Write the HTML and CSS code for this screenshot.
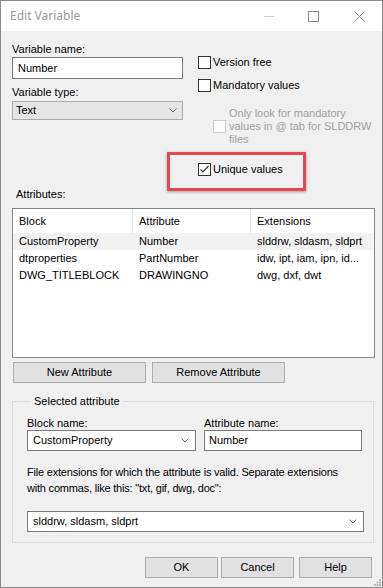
FILE: index.html
```html
<!DOCTYPE html>
<html>
<head>
<meta charset="utf-8">
<link rel="stylesheet" href="styles.css">
</head>
<body>
<div class="window">
  <div class="titlebar">
    <span class="title">Edit Variable</span>
    <div class="controls">
      <svg class="ctl ctl-min" width="10" height="10" viewBox="0 0 10 10"><line x1="0" y1="5.5" x2="10" y2="5.5" stroke="#cfcfcf" stroke-width="1"/></svg>
      <svg class="ctl ctl-max" width="11" height="11" viewBox="0 0 11 11"><rect x="0.5" y="0.5" width="10" height="10" fill="none" stroke="#8a8a8a" stroke-width="1"/></svg>
      <svg class="ctl ctl-close" width="11" height="11" viewBox="0 0 11 11"><path d="M0.5 0.5 L10.5 10.5 M10.5 0.5 L0.5 10.5" stroke="#8a8a8a" stroke-width="1" fill="none"/></svg>
    </div>
  </div>
  <div class="client">
    <div class="top">
      <div class="left">
        <div class="lbl lbl-first">Variable name:</div>
        <div class="textbox tb-name">Number</div>
        <div class="lbl lbl-type">Variable type:</div>
        <div class="combo combo-list"><span>Text</span><svg class="chev" width="8" height="5" viewBox="0 0 8 5"><polyline points="0.5,0.5 4,4 7.5,0.5" fill="none" stroke="#606060" stroke-width="1"/></svg></div>
      </div>
      <div class="right">
        <div class="check check-first"><span class="box"></span><span>Version free</span></div>
        <div class="check check-second"><span class="box"></span><span>Mandatory values</span></div>
        <div class="sub">
          <span class="box box-disabled"></span>
          <span class="sub-text">Only look for mandatory<br>values in @ tab for SLDDRW<br>files</span>
        </div>
        <div class="highlight">
          <div class="check"><span class="box"><svg width="11" height="11" viewBox="0 0 11 11"><polyline points="1.5,5.5 4,8 9.5,2" fill="none" stroke="#333" stroke-width="1.2"/></svg></span><span>Unique values</span></div>
        </div>
      </div>
    </div>
    <div class="lbl lbl-attr">Attributes:</div>
    <div class="list">
      <div class="lrow lhead">
        <div class="c1">Block</div><div class="c2">Attribute</div><div class="c3">Extensions</div>
      </div>
      <div class="lrow litem sel">
        <div class="c1">CustomProperty</div><div class="c2">Number</div><div class="c3">slddrw, sldasm, sldprt</div>
      </div>
      <div class="lrow litem">
        <div class="c1">dtproperties</div><div class="c2">PartNumber</div><div class="c3">idw, ipt, iam, ipn, id...</div>
      </div>
      <div class="lrow litem">
        <div class="c1">DWG_TITLEBLOCK</div><div class="c2">DRAWINGNO</div><div class="c3">dwg, dxf, dwt</div>
      </div>
    </div>
    <div class="btnrow">
      <div class="btn btn-wide">New Attribute</div>
      <div class="btn btn-wide">Remove Attribute</div>
    </div>
    <fieldset class="group">
      <legend>Selected attribute</legend>
      <div class="grow">
        <div class="gcol gcol-block">
          <div class="lbl">Block name:</div>
          <div class="combo combo-white combo-block"><span>CustomProperty</span><svg class="chev" width="8" height="5" viewBox="0 0 8 5"><polyline points="0.5,0.5 4,4 7.5,0.5" fill="none" stroke="#707070" stroke-width="1"/></svg></div>
        </div>
        <div class="gcol gcol-attr">
          <div class="lbl">Attribute name:</div>
          <div class="textbox tb-attr">Number</div>
        </div>
      </div>
      <div class="para">File extensions for which the attribute is valid. Separate extensions<br>with commas, like this: "txt, gif, dwg, doc":</div>
      <div class="combo combo-white combo-ext"><span>slddrw, sldasm, sldprt</span><svg class="chev" width="8" height="5" viewBox="0 0 8 5"><polyline points="0.5,0.5 4,4 7.5,0.5" fill="none" stroke="#707070" stroke-width="1"/></svg></div>
    </fieldset>
    <div class="footer">
      <div class="btn btn-ok">OK</div>
      <div class="btn btn-cancel">Cancel</div>
      <div class="btn btn-help">Help</div>
    </div>
  </div>
  <svg class="grip" width="7" height="7" viewBox="0 0 7 7">
    <rect x="5" y="0" width="2" height="2" fill="#b8b8b8"/>
    <rect x="2.5" y="2.5" width="2" height="2" fill="#b8b8b8"/>
    <rect x="5" y="2.5" width="2" height="2" fill="#b8b8b8"/>
    <rect x="0" y="5" width="2" height="2" fill="#b8b8b8"/>
    <rect x="2.5" y="5" width="2" height="2" fill="#b8b8b8"/>
    <rect x="5" y="5" width="2" height="2" fill="#b8b8b8"/>
  </svg>
</div>
</body>
</html>
```

FILE: styles.css
```css
* { box-sizing: border-box; }
html, body { margin: 0; padding: 0; background: #f0f0f0; }
body {
  font-family: "Liberation Sans", Arial, sans-serif;
  font-size: 11px;
  line-height: 13px;
  color: #000;
}
.window {
  position: relative;
  width: 383px;
  height: 588px;
  border: 1px solid #8a8a8a;
  background: #f0f0f0;
  overflow: hidden;
}
.titlebar {
  height: 30px;
  background: #fff;
  display: flex;
  align-items: center;
  padding-left: 9px;
}
.title {
  font-family: "Noto Sans", "Open Sans", sans-serif;
  font-size: 12px;
  color: #9a9a9a;
  line-height: 16px;
  flex: 1;
}
.controls { display: flex; align-items: center; height: 30px; }
.ctl { display: block; }
.ctl-min { margin-right: 34px; }
.ctl-max { margin-right: 35px; }
.ctl-close { margin-right: 17px; }

.client { padding: 0 0 0 11px; }

.top { display: flex; height: 157px; }
.left { width: 171px; }
.lbl { height: 13px; line-height: 13px; white-space: nowrap; }
.lbl-first { margin-top: 12px; }
.textbox {
  background: #fff;
  border: 1px solid #7a7a7a;
  white-space: nowrap;
}
.tb-name { margin-top: 1px; height: 22px; line-height: 20px; padding-left: 5px; }
.lbl-type { margin-top: 7px; }
.combo {
  display: flex;
  align-items: center;
  justify-content: space-between;
  white-space: nowrap;
}
.combo-list {
  margin-top: 2px;
  height: 19px;
  background: #e5e5e5;
  border: 1px solid #acacac;
  padding: 0 5px 0 3px;
}
.chev { display: block; }

.right { margin-left: 15px; }
.check { display: flex; align-items: center; height: 13px; white-space: nowrap; }
.box {
  width: 13px; height: 13px;
  border: 1px solid #333;
  background: #fff;
  flex: none;
  display: flex; align-items: center; justify-content: center;
}
.box svg { display: block; }
.check .box { margin-right: 2px; }
.check-first { margin-top: 25px; }
.check-second { margin-top: 10px; }
.sub {
  margin-top: 15px;
  padding-left: 15px;
  display: flex;
  align-items: center;
}
.box-disabled { border-color: #cccccc; background: #fcfcfc; margin-right: 3px; }
.sub-text { color: #a0a0a0; line-height: 13px; white-space: nowrap; }
.highlight {
  margin-top: 6px;
  margin-left: -31px;
  width: 139px;
  height: 39px;
  border: 3px solid #e4484e;
  box-shadow: 0 1px 3px rgba(0,0,0,0.35);
  padding: 8px 0 0 28px;
}

.lbl-attr { margin-left: 4px; }
.list {
  margin-top: 7px;
  width: 363px;
  height: 150px;
  background: #fff;
  border: 1px solid #828790;
}
.lrow { display: flex; white-space: nowrap; }
.lrow > div { padding-left: 6px; overflow: hidden; }
.c1 { width: 120px; }
.c2 { width: 118px; }
.c3 { flex: 1; }
.lhead { height: 24px; align-items: center; }
.lhead > div { height: 24px; line-height: 24px; border-right: 1px solid #e5e5e5; }
.lhead > .c3 { border-right: none; }
.litem { height: 17px; line-height: 17px; }
.litem > div { padding-left: 6px; }
.sel { background: #f2f2f2; margin-right: 1px; }

.btnrow { display: flex; margin-top: 4px; margin-left: 1px; gap: 6px; }
.btn {
  height: 21px;
  background: #e1e1e1;
  border: 1px solid #adadad;
  display: flex; align-items: center; justify-content: center;
  white-space: nowrap;
}
.btn-wide { width: 133px; }

.group {
  margin: 11px 0 0 0;
  width: 362px;
  border: 1px solid #dcdcdc;
  padding: 9px 0 10px 14px;
  min-width: 0;
}
.group legend {
  margin-left: 4px;
  padding: 0 3px;
  line-height: 14px;
  height: 14px;
}
.grow { display: flex; }
.gcol-block { width: 169px; }
.gcol-attr { margin-left: 8px; width: 158px; }
.combo-white {
  background: #fff;
  border: 1px solid #7a7a7a;
  padding: 0 6px 0 5px;
}
.combo-block { height: 21px; }
.tb-attr { height: 21px; line-height: 19px; padding-left: 4px; }
.para { margin-top: 13px; line-height: 16px; white-space: nowrap; letter-spacing: -0.2px; }
.combo-ext { margin-top: 15px; width: 337px; height: 21px; }

.footer { display: flex; margin-top: 14px; margin-left: 133px; }
.btn-ok, .btn-cancel, .btn-help { width: 73px; }
.btn-cancel { margin-left: 3px; }
.btn-help { margin-left: 5px; }

.grip { position: absolute; right: 1px; bottom: 1px; display: block; }
```
